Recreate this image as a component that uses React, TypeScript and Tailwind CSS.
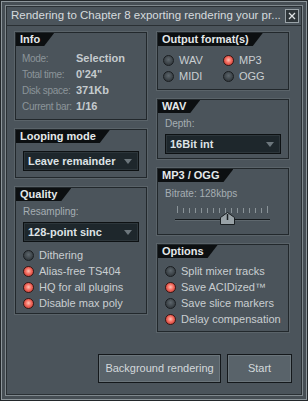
import type { ReactNode } from 'react'

const font = { fontFamily: '"Liberation Sans", Arial, sans-serif' }

function Header({ children }: { children: ReactNode }) {
  return (
    <div className="flex">
      <div className="h-[13px] whitespace-nowrap bg-[#0c0f11] pl-[4px] pr-[14px] text-[11px] font-bold leading-[13px] text-[#e4e8ea] [clip-path:polygon(0_0,100%_0,calc(100%-10px)_100%,0_100%)]">
        {children}
      </div>
    </div>
  )
}

function Panel({ title, className, children }: { title: string; className: string; children?: ReactNode }) {
  return (
    <div className={`border border-[#22282c] bg-[#4b545b] shadow-[0_0_0_1px_#5a6369] ${className}`}>
      <Header>{title}</Header>
      {children}
    </div>
  )
}

function Radio({ on, label }: { on?: boolean; label: string }) {
  return (
    <div className="flex h-[16px] items-center gap-[5px] whitespace-nowrap">
      <div
        className={`h-[11px] w-[11px] shrink-0 rounded-full border ${
          on
            ? 'border-[#3a1512] bg-[radial-gradient(circle_at_50%_45%,#ffc2b4_0%,#f2685c_45%,#b9332b_100%)]'
            : 'border-[#1a1e21] bg-[radial-gradient(circle_at_50%_40%,#5d666c_0%,#3b4247_60%,#2a3034_100%)]'
        }`}
      />
      <span className="text-[11px] text-[#c9ced1]">{label}</span>
    </div>
  )
}

function Select({ value }: { value: string }) {
  return (
    <div className="flex h-[20px] items-center justify-between border border-[#0d1113] bg-[#1e272c] px-[4px] shadow-[inset_0_0_0_1px_#2d363b]">
      <span className="whitespace-nowrap text-[11px] font-bold text-[#dde2e5]">{value}</span>
      <svg width="8" height="5" viewBox="0 0 8 5" className="mr-[2px]">
        <polygon points="0,0 8,0 4,5" fill="#6c767c" />
      </svg>
    </div>
  )
}

function InfoRow({ label, value }: { label: string; value: string }) {
  return (
    <div className="flex h-[16px] items-center whitespace-nowrap">
      <span className="w-[54px] shrink-0 text-[10px] tracking-[-0.3px] text-[#8c959a]">{label}</span>
      <span className="text-[11px] font-bold text-[#c5cbce]">{value}</span>
    </div>
  )
}

function Button({ children, className }: { children: ReactNode; className: string }) {
  return (
    <div
      className={`flex h-[29px] items-center justify-center whitespace-nowrap border border-[#14181b] bg-[#59636a] text-[11px] text-[#d3d8db] shadow-[inset_0_0_0_1px_#6b757b] ${className}`}
    >
      {children}
    </div>
  )
}

export default function App() {
  return (
    <div style={font} className="h-[401px] w-[308px] bg-[#23282b] p-[1px]">
      <div className="h-full border border-[#8d969b] bg-[#464e54] p-[3px]">
        <div className="flex h-full flex-col border border-[#7f888d] bg-[#2a3034] p-[1px]">
          <div className="flex h-[18px] items-center justify-between bg-[#4b545b] pl-[4px] pr-[2px]">
            <span className="whitespace-nowrap text-[11.5px] text-[#d6dbde]">Rendering to Chapter 8 exporting rendering your pr...</span>
            <div className="flex h-[14px] w-[14px] shrink-0 items-center justify-center border border-[#9aa3a8] bg-[#2f363a]">
              <svg width="8" height="8" viewBox="0 0 8 8">
                <path d="M1 1 L7 7 M7 1 L1 7" stroke="#dfe3e5" strokeWidth="1.3" />
              </svg>
            </div>
          </div>
          <div className="flex-1 border-t border-[#2a3034] bg-[#4b545b] px-[8px] pt-[6px]">
            <div className="flex gap-[10px]">
              <div className="flex w-[132px] flex-col gap-[9px]">
                <Panel title="Info" className="h-[88px]">
                  <div className="px-[6px] pt-[4px]">
                    <InfoRow label="Mode:" value="Selection" />
                    <InfoRow label="Total time:" value="0'24&quot;" />
                    <InfoRow label="Disk space:" value="371Kb" />
                    <InfoRow label="Current bar:" value="1/16" />
                  </div>
                </Panel>
                <Panel title="Looping mode" className="h-[49px]">
                  <div className="px-[7px] pt-[8px]">
                    <Select value="Leave remainder" />
                  </div>
                </Panel>
                <Panel title="Quality" className="h-[127px]">
                  <div className="px-[7px]">
                    <div className="pt-[3px] text-[10px] text-[#a6aeb3]">Resampling:</div>
                    <div className="pt-[3px]">
                      <Select value="128-point sinc" />
                    </div>
                    <div className="pt-[5px]">
                      <Radio label="Dithering" />
                      <Radio on label="Alias-free TS404" />
                      <Radio on label="HQ for all plugins" />
                      <Radio on label="Disable max poly" />
                    </div>
                  </div>
                </Panel>
              </div>
              <div className="flex w-[132px] flex-col gap-[9px]">
                <Panel title="Output format(s)" className="h-[58px]">
                  <div className="grid grid-cols-2 px-[5px] pt-[6px]">
                    <Radio label="WAV" />
                    <Radio on label="MP3" />
                    <Radio label="MIDI" />
                    <Radio label="OGG" />
                  </div>
                </Panel>
                <Panel title="WAV" className="h-[60px]">
                  <div className="px-[7px]">
                    <div className="pt-[3px] text-[10px] text-[#a6aeb3]">Depth:</div>
                    <div className="pt-[3px]">
                      <Select value="16Bit int" />
                    </div>
                  </div>
                </Panel>
                <Panel title="MP3 / OGG" className="h-[67px]">
                  <div className="px-[7px]">
                    <div className="pt-[4px] text-[10px] text-[#a6aeb3]">Bitrate: 128kbps</div>
                    <svg width="118" height="26" viewBox="0 0 118 26" className="mt-[2px]">
                      {Array.from({ length: 16 }).map((_, i) => (
                        <line key={i} x1={12.5 + i * 6} y1={i === 0 || i === 15 ? 3 : 5} x2={12.5 + i * 6} y2="10" stroke="#8a9398" strokeWidth="1" />
                      ))}
                      <line x1="10" y1="16.5" x2="105" y2="16.5" stroke="#14181b" strokeWidth="1" />
                      <line x1="10" y1="17.5" x2="105" y2="17.5" stroke="#5e676d" strokeWidth="1" />
                      <path d="M55.5 21.5 L55.5 14.5 L62.5 9.5 L69.5 14.5 L69.5 21.5 Z" fill="#99a2a7" stroke="#1a1f22" strokeWidth="1" />
                      <line x1="62.5" y1="11" x2="62.5" y2="17" stroke="#1a1f22" strokeWidth="1.5" />
                    </svg>
                  </div>
                </Panel>
                <Panel title="Options" className="h-[88px]">
                  <div className="px-[7px] pt-[5px]">
                    <Radio label="Split mixer tracks" />
                    <Radio on label="Save ACIDized™" />
                    <Radio label="Save slice markers" />
                    <Radio on label="Delay compensation" />
                  </div>
                </Panel>
              </div>
            </div>
            <div className="mt-[22px] flex justify-end gap-[6px] pr-[1px]">
              <Button className="w-[123px]">Background rendering</Button>
              <Button className="w-[65px]">Start</Button>
            </div>
          </div>
        </div>
      </div>
    </div>
  )
}
